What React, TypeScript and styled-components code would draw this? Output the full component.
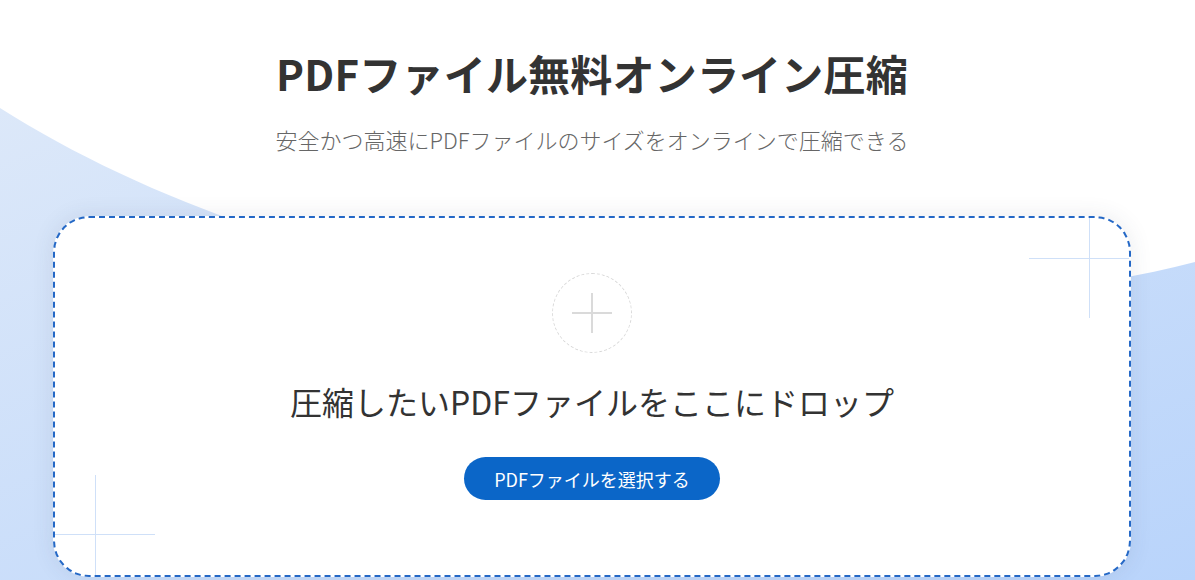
import styled, { createGlobalStyle } from "styled-components";

const GlobalStyle = createGlobalStyle`
    body {
        margin: 0;
        font-family: "Noto Sans CJK JP", "Noto Sans", sans-serif;
        color: #333;
    }
`;

const App: React.FC = () => (
    <Page>
        <GlobalStyle />
        <Wave viewBox="0 0 1195 580" preserveAspectRatio="none">
            <defs>
                <linearGradient id="waveFill" x1="0" y1="0" x2="1" y2="1">
                    <stop offset="0" stopColor="#dce8f9" />
                    <stop offset="1" stopColor="#b9d4fb" />
                </linearGradient>
            </defs>
            <path
                d="M0,108 C160,210 400,290 620,300 C850,310 1050,300 1195,262 L1195,580 L0,580 Z"
                fill="url(#waveFill)"
            />
        </Wave>
        <Main>
            <Title>PDFファイル無料オンライン圧縮</Title>
            <Subtitle>安全かつ高速にPDFファイルのサイズをオンラインで圧縮できる</Subtitle>
            <DropZone>
                <Cross corner="topRight" />
                <Cross corner="bottomLeft" />
                <AddCircle>
                    <svg width="40" height="40" viewBox="0 0 40 40">
                        <path d="M20 0v40M0 20h40" stroke="#dadada" strokeWidth="2" />
                    </svg>
                </AddCircle>
                <DropText>圧縮したいPDFファイルをここにドロップ</DropText>
                <SelectButton>PDFファイルを選択する</SelectButton>
            </DropZone>
        </Main>
    </Page>
);

const Page = styled.div`
    position: relative;
    height: 580px;
    overflow: hidden;
    background: #fff;
`;

const Wave = styled.svg`
    position: absolute;
    inset: 0;
    width: 100%;
    height: 100%;
`;

const Main = styled.main`
    position: relative;
    display: flex;
    flex-direction: column;
    align-items: center;
    padding: 45px 11px 0 0;
`;

const Title = styled.h1`
    margin: 0;
    font-size: 42px;
    font-weight: 700;
    line-height: 56px;
    letter-spacing: 0.2px;
    color: #333;
`;

const Subtitle = styled.p`
    margin: 22px 0 0;
    font-size: 22px;
    font-weight: 300;
    line-height: 33px;
    color: #666;
`;

const DropZone = styled.section`
    position: relative;
    box-sizing: border-box;
    width: 1078px;
    height: 361px;
    margin-top: 60px;
    display: flex;
    flex-direction: column;
    align-items: center;
    padding-top: 55px;
    background: #fff;
    border: 2px dashed #2468c6;
    border-radius: 36px;
    box-shadow: 0 0 22px rgba(60, 70, 90, 0.1);
`;

const Cross = styled.div<{ corner: "topRight" | "bottomLeft" }>`
    position: absolute;
    width: 100px;
    height: 100px;
    ${({ corner }) => (corner === "topRight" ? "top: 0; right: 0;" : "bottom: 0; left: 0;")}

    &::before,
    &::after {
        content: "";
        position: absolute;
        background: #cfe0f8;
    }

    &::before {
        width: 1px;
        top: 0;
        bottom: 0;
        left: ${({ corner }) => (corner === "topRight" ? "60px" : "40px")};
    }

    &::after {
        height: 1px;
        left: 0;
        right: 0;
        top: ${({ corner }) => (corner === "topRight" ? "40px" : "59px")};
    }
`;

const AddCircle = styled.div`
    box-sizing: border-box;
    width: 80px;
    height: 80px;
    display: flex;
    align-items: center;
    justify-content: center;
    border: 1px dashed #d8d8d8;
    border-radius: 50%;
`;

const DropText = styled.p`
    margin: 26px 0 0;
    font-size: 32px;
    font-weight: 400;
    line-height: 45px;
    color: #333;
`;

const SelectButton = styled.button`
    margin-top: 33px;
    width: 256px;
    height: 43px;
    border: none;
    border-radius: 22px;
    background: #0b66c8;
    color: #fff;
    font-family: inherit;
    font-size: 18px;
    cursor: pointer;
`;

export default App;
